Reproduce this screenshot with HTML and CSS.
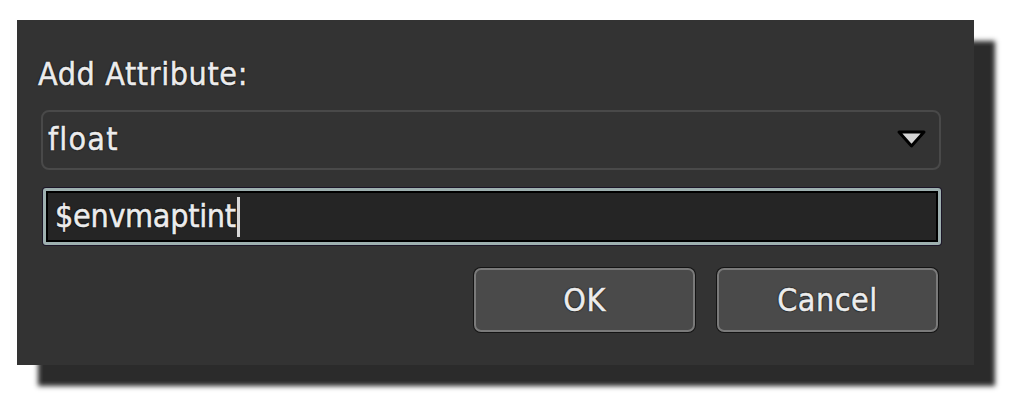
FILE: index.html
```html
<!DOCTYPE html>
<html>
<head>
<meta charset="utf-8">
<link rel="stylesheet" href="styles.css">
</head>
<body>
<div class="dialog">
  <div class="label">Add Attribute:</div>
  <div class="combo">
    <span class="combo-text">float</span>
    <svg class="arrow" width="31" height="20" viewBox="0 0 31 20">
      <path d="M3 3 H28 L15.5 17 Z" fill="#d4d4d4" stroke="#000" stroke-width="3" stroke-linejoin="round"/>
    </svg>
  </div>
  <div class="input"><span class="input-text">$envmaptint</span><span class="caret"></span></div>
  <div class="buttons">
    <div class="btn">OK</div>
    <div class="btn">Cancel</div>
  </div>
</div>
</body>
</html>
```

FILE: styles.css
```css
html, body {
  margin: 0;
  padding: 0;
  background: #ffffff;
}
body {
  width: 1009px;
  height: 400px;
  overflow: hidden;
  font-family: "DejaVu Sans Condensed", "DejaVu Sans", sans-serif;
  color: #ececec;
  -webkit-text-stroke: 0.5px #ececec;
}
.dialog {
  box-sizing: border-box;
  margin: 20px 0 0 17px;
  width: 957px;
  height: 345px;
  background: #333333;
  box-shadow: 21px 21px 5px rgba(20, 20, 20, 0.9);
  padding: 0 33px 0 24px;
  display: flex;
  flex-direction: column;
}
.label {
  font-size: 32px;
  line-height: 38px;
  margin-top: 35px;
  margin-left: -3px;
  height: 55px;
  letter-spacing: 0.6px;
  text-shadow: 0 0 2px #000, 0 0 1px #000, 0 0 1px #000;
}
.combo {
  box-sizing: border-box;
  height: 60px;
  border: 2px solid #494949;
  border-radius: 8px;
  display: flex;
  align-items: center;
  justify-content: space-between;
  padding: 0 12px 0 5px;
}
.combo-text {
  font-size: 32px;
  letter-spacing: 1.2px;
  text-shadow: 0 0 2px #000, 0 0 1px #000, 0 0 1px #000;
  margin-top: -2px;
}
.arrow {
  display: block;
  margin-top: -2px;
}
.input {
  box-sizing: border-box;
  height: 57px;
  margin-top: 18px;
  margin-left: 2px;
  border: 3px solid #9eb0b0;
  border-radius: 3px;
  box-shadow: 0 0 0 1px #1c1628, inset 0 0 0 2px #000;
  background: #252525;
  display: flex;
  align-items: center;
  padding-left: 9px;
}
.input-text {
  font-size: 32px;
  letter-spacing: -0.3px;
  text-shadow: 0 0 2px #000, 0 0 1px #000, 0 0 1px #000;
  margin-top: -2px;
}
.caret {
  display: block;
  width: 3px;
  height: 40px;
  background: #d8d8d8;
  margin-left: 1px;
}
.buttons {
  display: flex;
  justify-content: flex-end;
  gap: 22px;
  margin-top: 23px;
  padding-right: 3px;
}
.btn {
  box-sizing: border-box;
  width: 221px;
  height: 64px;
  border: 2px solid #7a7a7a;
  border-radius: 7px;
  box-shadow: 0 0 0 1px #141414;
  background: #4a4a4a;
  display: flex;
  align-items: center;
  justify-content: center;
  font-size: 32px;
  letter-spacing: 0.5px;
  text-shadow: 0 0 2px #000, 0 0 1px #000, 0 0 1px #000;
}
```
